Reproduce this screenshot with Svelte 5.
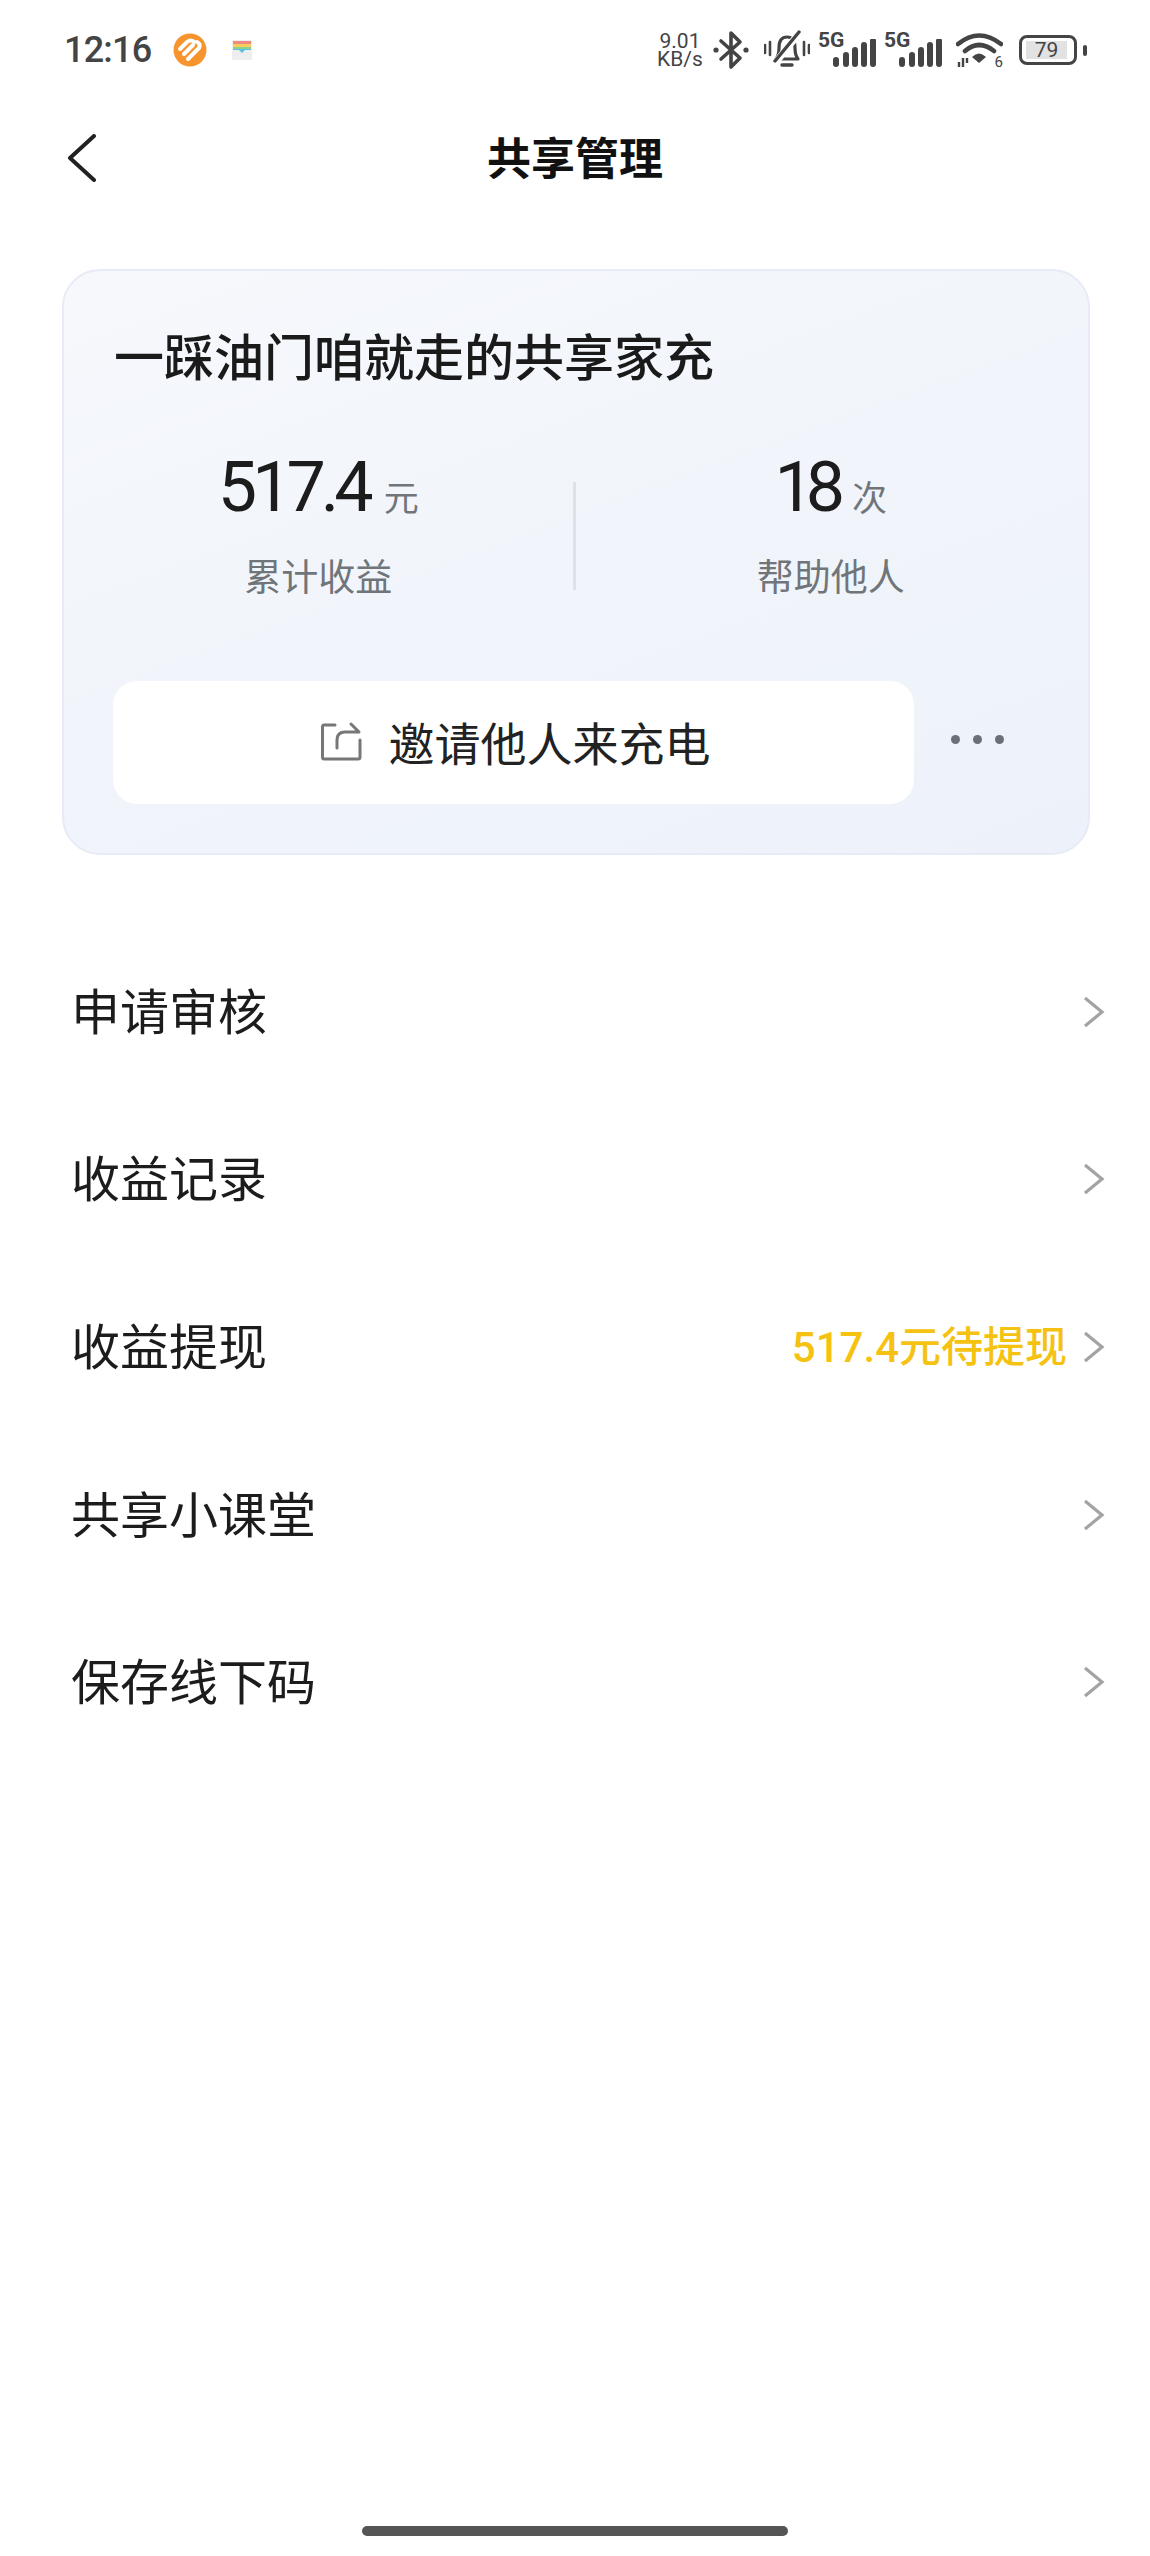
<script>
  const rows = [
    { label: '申请审核' },
    { label: '收益记录' },
    { label: '收益提现', note: '517.4元待提现' },
    { label: '共享小课堂' },
    { label: '保存线下码' }
  ];
</script>

<div class="page">
  <header class="status">
    <div class="status-left">
      <span class="time">12:16</span>
      <svg class="logo" width="34" height="34" viewBox="0 0 34 34">
        <circle cx="17" cy="17" r="16.5" fill="#f7942e" />
        <path d="M7 16 L14 9 Q18 6 21 9 M11 21 L20 12 M15 26 L26 15 Q28 11 24 9" fill="none" stroke="#fff" stroke-width="4" stroke-linecap="round" />
      </svg>
      <svg class="wallet" width="20" height="20" viewBox="0 0 20 20">
        <rect width="20" height="20" fill="#eeeeee" />
        <path d="M1 1h18v3H1z" fill="#ee8a80" />
        <path d="M1 4h18v3H1z" fill="#f6cf5f" />
        <path d="M1 7h18v2H1z" fill="#8fd08a" />
        <path d="M1 9h18v1h-6l-3 3-3-3H1z" fill="#5cc0e8" />
      </svg>
    </div>
    <div class="status-right">
      <span class="speed">9.01<br />KB/s</span>
      <svg class="bt" width="36" height="40" viewBox="0 0 36 40">
        <path d="M8 11 L27 28 L18 37 V3 L27 12 L8 29" fill="none" stroke="#444" stroke-width="3.6" stroke-linejoin="round" stroke-linecap="round" />
        <circle cx="3" cy="20" r="2.6" fill="#444" /><circle cx="33" cy="20" r="2.6" fill="#444" />
      </svg>
      <svg class="bell" width="46" height="40" viewBox="0 0 46 40">
        <path d="M12 29 Q15 25 15 18 Q15 7 23 7 Q31 7 31 18 Q31 25 34 29 Z" fill="none" stroke="#444" stroke-width="3.2" stroke-linejoin="round" />
        <path d="M18 35 H28" stroke="#444" stroke-width="3.4" stroke-linecap="round" />
        <path d="M12 32 L36 2" stroke="#fff" stroke-width="7" />
        <path d="M11 31 L35 2" stroke="#444" stroke-width="3.4" stroke-linecap="round" />
        <path d="M1 15v8M6 12v13M40 12v13M45 15v8" stroke="#444" stroke-width="2.6" stroke-linecap="round" />
      </svg>
      <span class="net">
        <b>5G</b>
        <svg width="44" height="28" viewBox="0 0 44 28"><path d="M3 21v4M13 16v9M22 11v14M31 6v19M40 2v23" stroke="#444" stroke-width="6" stroke-linecap="round" /></svg>
      </span>
      <span class="net">
        <b>5G</b>
        <svg width="44" height="28" viewBox="0 0 44 28"><path d="M3 21v4M13 16v9M22 11v14M31 6v19M40 2v23" stroke="#444" stroke-width="6" stroke-linecap="round" /></svg>
      </span>
      <span class="wifi">
        <svg width="47" height="34" viewBox="0 0 47 34">
          <path d="M2 11 Q23 -6 45 11M9 18 Q23 6 38 18" fill="none" stroke="#444" stroke-width="4.6" stroke-linecap="round" />
          <path d="M16 24 Q23 17 30 24 L23 30 Z" fill="#444" />
          <path d="M3 29v5M7 25v9M11 25v5" stroke="#444" stroke-width="2.400" />
        </svg>
        <i>6</i>
      </span>
      <span class="battery">
        <span class="shell"><span class="level">79</span></span>
        <span class="nub"></span>
      </span>
    </div>
  </header>

  <nav class="nav">
    <svg class="back" width="30" height="48" viewBox="0 0 30 48"><path d="M27 2 L3 24 L27 46" fill="none" stroke="#222" stroke-width="4" stroke-linecap="round" stroke-linejoin="round" /></svg>
    <h1>共享管理</h1>
  </nav>

  <section class="card">
    <h2>一踩油门咱就走的共享家充</h2>
    <div class="stats">
      <div class="stat">
        <div class="value"><strong>517.4</strong><em>元</em></div>
        <div class="caption">累计收益</div>
      </div>
      <div class="divider"></div>
      <div class="stat second">
        <div class="value"><strong class="tight">18</strong><em>次</em></div>
        <div class="caption">帮助他人</div>
      </div>
    </div>
    <div class="actions">
      <div class="invite">
        <svg width="42" height="40" viewBox="0 0 42 40">
          <path d="M14 4 H3 Q1.500 4 1.500 6 V36 Q1.500 38 3 38 H37 Q39 38 39 36 V19" fill="none" stroke="#777" stroke-width="3" stroke-linecap="round" />
          <path d="M16 27 V19 Q16 11 24 11 H37 M30 3 L38 11" fill="none" stroke="#777" stroke-width="3" stroke-linecap="round" stroke-linejoin="round" />
        </svg>
        <span>邀请他人来充电</span>
      </div>
      <div class="more"><i></i><i></i><i></i></div>
    </div>
  </section>

  <ul class="list">
    {#each rows as row}
      <li>
        <span class="label">{row.label}</span>
        {#if row.note}<span class="note">{row.note}</span>{/if}
        <svg class="chev" width="22" height="32" viewBox="0 0 22 32"><path d="M2 2 L19 16 L2 30" fill="none" stroke="#a3a3a3" stroke-width="3.2" /></svg>
      </li>
    {/each}
  </ul>

  <div class="home"></div>
</div>

<style>
  :global(body) { margin: 0; background: #fff; }
  .page {
    width: 1150px;
    height: 2556px;
    display: flex;
    flex-direction: column;
    font-family: "Noto Sans CJK SC", "Noto Sans", sans-serif;
    color: #1c1c1c;
    background: #fff;
  }
  .status {
    height: 100px;
    flex: none;
    display: flex;
    align-items: center;
    justify-content: space-between;
    padding: 0 63px 0 64px;
    color: #444;
  }
  .status-left, .status-right { display: flex; align-items: center; }
  .time { font: 500 36px/1 Roboto, sans-serif; letter-spacing: -0.8px; width: 109px; }
  .wallet { margin-left: 25px; }
  .speed { font: 400 21px/18px Roboto, sans-serif; text-align: center; width: 46px; }
  .bt { margin-left: 10px; }
  .bell { margin-left: 15px; }
  .net { position: relative; width: 60px; height: 34px; margin-left: 7px; display: block; }
  .net + .net { margin-left: 6px; }
  .net b { position: absolute; left: 1px; top: -3px; font: 700 21px/1 Roboto, sans-serif; }
  .net svg { position: absolute; right: 0; bottom: 0; }
  .wifi { position: relative; width: 47px; height: 34px; margin-left: 13px; display: block; }
  .wifi i { position: absolute; right: 0; bottom: -3px; font: 400 15px/1 Roboto, sans-serif; }
  .battery { display: flex; align-items: center; margin-left: 16px; }
  .shell {
    box-sizing: border-box;
    width: 58px;
    height: 30px;
    border: 3px solid #444;
    border-radius: 8px;
    padding: 3px 7px 3px 4px;
    display: flex;
  }
  .level {
    flex: 1;
    background: #e2e2e2;
    font: 400 21px/18px Roboto, sans-serif;
    text-align: center;
  }
  .nub { width: 4px; height: 11px; background: #444; border-radius: 2px; margin-left: 6px; }

  .nav {
    position: relative;
    height: 116px;
    flex: none;
    display: flex;
    align-items: center;
    justify-content: center;
  }
  .back { position: absolute; left: 67px; top: 34px; }
  h1 { margin: 0 0 4px; font-size: 44px; font-weight: 600; color: #111; line-height: 1; }

  .card {
    box-sizing: border-box;
    flex: none;
    width: 1028px;
    height: 586px;
    margin: 53px 0 0 62px;
    padding: 49px 0 0;
    border: 2px solid #e6ebf5;
    border-radius: 38px;
    background: linear-gradient(160deg, #f6f8fc 0%, #f1f5fb 50%, #edf1f9 100%);
  }
  h2 { margin: 0 0 0 50px; font-size: 50px; font-weight: 500; line-height: 68px; color: #1a1a1a; }
  .stats { display: flex; align-items: center; margin-top: 64px; height: 146px; }
  .stat { flex: 1; display: flex; flex-direction: column; align-items: center; }
  .stat.second { padding-right: 3px; }
  .value { display: flex; align-items: baseline; line-height: 76px; }
  strong { font: 400 70px/76px Roboto, sans-serif; color: #1c1c1c; letter-spacing: -5px; }
  strong.tight { letter-spacing: -8px; }
  em { font-style: normal; font-size: 35px; color: #70757a; margin-left: 15px; }
  .caption { font-size: 37px; line-height: 52px; color: #70757a; margin-top: 15px; }
  .divider { width: 3px; height: 108px; background: #dde1e8; flex: none; margin: 22px 1px 0 0; }
  .actions { display: flex; align-items: center; margin: 83px 0 0 49px; }
  .invite {
    width: 801px;
    height: 123px;
    box-sizing: border-box;
    background: #fff;
    border-radius: 24px;
    display: flex;
    align-items: center;
    justify-content: center;
    gap: 26px;
    padding: 0 0 3px 4px;
    font-size: 46px;
    color: #222;
  }
  .more { display: flex; gap: 13px; margin: 0 0 6px 37px; }
  .more i { width: 9px; height: 9px; border-radius: 50%; background: #6b7077; }

  .list { list-style: none; margin: 73px 0 0; padding: 0 45px 0 71px; }
  .list li { height: 167.6px; display: flex; align-items: center; }
  .label { font-size: 49px; color: #1c1c1c; flex: 1; margin-bottom: 7px; }
  .note { font-family: Roboto, "Noto Sans CJK SC", sans-serif; font-size: 42px; font-weight: 500; color: #f5c211; margin: 0 16px 6px 0; }
  .home { width: 426px; height: 10px; border-radius: 5px; background: #555; margin: auto auto 20px; }
</style>
